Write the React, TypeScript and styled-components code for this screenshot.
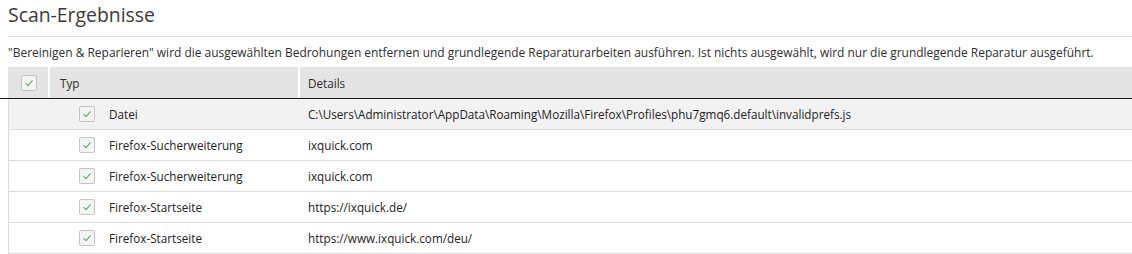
import React from 'react';
import styled, { createGlobalStyle } from 'styled-components';

const GlobalStyle = createGlobalStyle`
  body {
    margin: 0;
    background: #ffffff;
    font-family: "Open Sans", "Noto Sans", sans-serif;
    color: #333333;
  }
`;

const Page = styled.div`
  padding-left: 8px;
  width: 1124px;
  overflow: hidden;
`;

const Title = styled.h1`
  margin: 0;
  height: 36px;
  font-size: 19.4px;
  font-weight: 400;
  line-height: 30px;
  color: #3a3a3a;
  border-bottom: 1px solid #dcdcdc;
`;

const Description = styled.p`
  margin: 0;
  height: 30px;
  font-size: 11.95px;
  line-height: 31px;
  color: #2e2e2e;
  white-space: nowrap;
`;

const HeaderRow = styled.div`
  position: relative;
  display: grid;
  grid-template-columns: 40px 2px 248px 2px 1fr;
  height: 31px;
  background: #e4e4e4;
  font-size: 11.7px;
  color: #2b2b2b;
  &::after {
    content: '';
    position: absolute;
    left: -8px;
    right: 0;
    bottom: -1px;
    height: 1px;
    background: #1a1a1a;
  }
`;

const Divider = styled.div`
  background: #ffffff;
`;

const HeadCell = styled.div<{ $pad?: number }>`
  display: flex;
  align-items: center;
  padding-left: ${(p) => p.$pad ?? 0}px;
`;

const Body = styled.div`
  margin-top: 1px;
  border-left: 1px solid #dcdcdc;
`;

const Row = styled.div<{ $active?: boolean }>`
  display: grid;
  grid-template-columns: 41px 250px 1fr;
  height: 30px;
  border-bottom: 1px solid #dcdcdc;
  background: ${(p) => (p.$active ? '#f2f2f2' : '#ffffff')};
  font-size: 11.7px;
  color: #222222;
`;

const TypCell = styled.div`
  display: flex;
  align-items: center;
  padding-left: 29px;
  gap: 14px;
`;

const DetailCell = styled.div`
  display: flex;
  align-items: center;
  padding-left: 8px;
  white-space: nowrap;
`;

const Box = styled.span`
  display: inline-flex;
  align-items: center;
  justify-content: center;
  width: 14px;
  height: 14px;
  border: 1px solid #c4c4c4;
  border-radius: 2px;
  background: #f4f4f4;
  flex-shrink: 0;
`;

const Check = () => (
  <Box>
    <svg width="10" height="10" viewBox="0 0 10 10">
      <path d="M1.5 5.2 L4 7.6 L8.6 2.4" fill="none" stroke="#5aae72" strokeWidth="1.1" />
    </svg>
  </Box>
);

const rows = [
  { typ: 'Datei', details: 'C:\\Users\\Administrator\\AppData\\Roaming\\Mozilla\\Firefox\\Profiles\\phu7gmq6.default\\invalidprefs.js' },
  { typ: 'Firefox-Sucherweiterung', details: 'ixquick.com' },
  { typ: 'Firefox-Sucherweiterung', details: 'ixquick.com' },
  { typ: 'Firefox-Startseite', details: 'https://ixquick.de/' },
  { typ: 'Firefox-Startseite', details: 'https://www.ixquick.com/deu/' },
];

const App = () => {
  return (
    <>
      <GlobalStyle />
      <Page>
        <Title>Scan-Ergebnisse</Title>
        <Description>
          "Bereinigen &amp; Reparieren" wird die ausgewählten Bedrohungen entfernen und grundlegende Reparaturarbeiten ausführen. Ist nichts ausgewählt, wird nur die grundlegende Reparatur ausgeführt.
        </Description>
        <HeaderRow>
          <HeadCell $pad={13}>
            <Check />
          </HeadCell>
          <Divider />
          <HeadCell $pad={10}>Typ</HeadCell>
          <Divider />
          <HeadCell $pad={8}>Details</HeadCell>
        </HeaderRow>
        <Body>
          {rows.map((row, index) => (
            <Row key={index} $active={index === 0}>
              <div />
              <TypCell>
                <Check />
                <span>{row.typ}</span>
              </TypCell>
              <DetailCell>{row.details}</DetailCell>
            </Row>
          ))}
        </Body>
      </Page>
    </>
  );
};

export default App;
